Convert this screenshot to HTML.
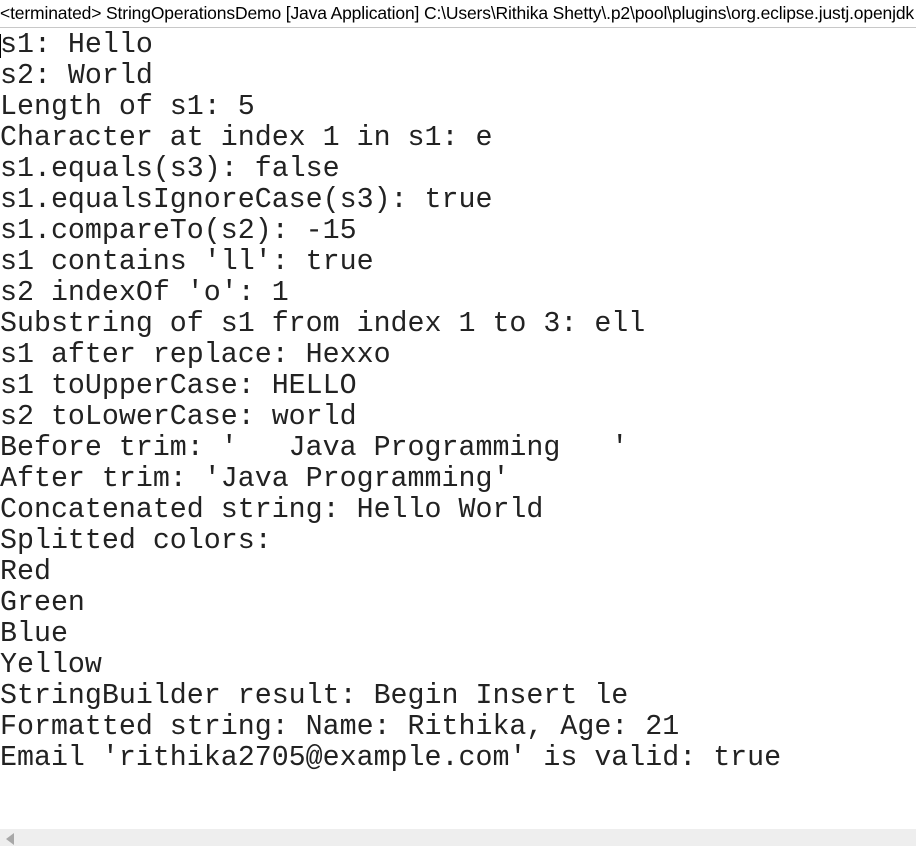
<!DOCTYPE html>
<html><head><meta charset="utf-8"><style>
html,body{margin:0;padding:0;width:916px;height:846px;overflow:hidden;background:#fff;}
.hdr{position:absolute;left:0;top:0;width:916px;height:27px;border-bottom:1px solid #c8c8c8;font:17.5px "Liberation Sans",sans-serif;color:#000;line-height:26px;white-space:nowrap;overflow:hidden;letter-spacing:-0.15px}
pre{position:absolute;left:0;top:30px;margin:0;font:28.3px/31px "Liberation Mono",monospace;color:#222;}
.caret{position:absolute;left:0;top:34px;width:1px;height:24px;background:#000}
.sb{position:absolute;left:0;top:829px;width:916px;height:17px;background:#eeeeee}
.arr{position:absolute;left:6px;top:4px;width:0;height:0;border-top:6px solid transparent;border-bottom:6px solid transparent;border-right:8px solid #a8a8a8}
</style></head><body>
<div class="hdr">&lt;terminated&gt; StringOperationsDemo [Java Application] C:\Users\Rithika Shetty\.p2\pool\plugins\org.eclipse.justj.openjdk</div>
<div class="caret"></div>
<pre>s1: Hello
s2: World
Length of s1: 5
Character at index 1 in s1: e
s1.equals(s3): false
s1.equalsIgnoreCase(s3): true
s1.compareTo(s2): -15
s1 contains 'll': true
s2 indexOf 'o': 1
Substring of s1 from index 1 to 3: ell
s1 after replace: Hexxo
s1 toUpperCase: HELLO
s2 toLowerCase: world
Before trim: '   Java Programming   '
After trim: 'Java Programming'
Concatenated string: Hello World
Splitted colors:
Red
Green
Blue
Yellow
StringBuilder result: Begin Insert le
Formatted string: Name: Rithika, Age: 21
Email 'rithika2705@example.com' is valid: true</pre>
<div class="sb"><div class="arr"></div></div>
</body></html>
